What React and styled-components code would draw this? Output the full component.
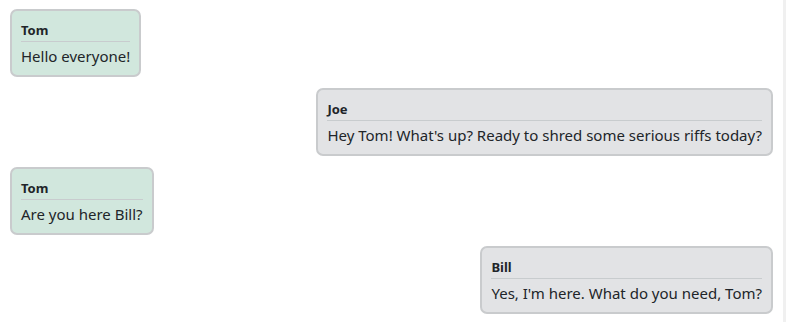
import React from 'react';
import styled, { createGlobalStyle } from 'styled-components';

const GlobalStyle = createGlobalStyle`
  html, body {
    margin: 0;
    padding: 0;
    background: #fff;
  }
  body {
    font-family: "Noto Sans", "Open Sans", sans-serif;
    color: #212529;
  }
`;

const Page = styled.div`
  width: 786px;
  height: 322px;
  box-sizing: border-box;
  border-right: 3px solid #f0f0f0;
  padding: 9px 10px 0 10px;
  display: flex;
  flex-direction: column;
  gap: 11px;
`;

const Row = styled.div`
  display: flex;
  justify-content: ${(p) => (p.$mine ? 'flex-start' : 'flex-end')};
`;

const Bubble = styled.div`
  background: ${(p) => (p.$mine ? '#d1e7dd' : '#e2e3e5')};
  border: 2px solid #c9cbcd;
  border-radius: 7px;
  padding: 10px 9px 9px 9px;
`;

const Name = styled.div`
  font-size: 13px;
  font-weight: 700;
  line-height: 18px;
  padding-bottom: 2px;
  border-bottom: 1px solid #c8ccce;
`;

const Text = styled.div`
  font-size: 15px;
  line-height: 20px;
  margin-top: 4px;
  white-space: nowrap;
`;

const messages = [
  { name: 'Tom', text: 'Hello everyone!', mine: true },
  { name: 'Joe', text: "Hey Tom! What's up? Ready to shred some serious riffs today?", mine: false },
  { name: 'Tom', text: 'Are you here Bill?', mine: true },
  { name: 'Bill', text: "Yes, I'm here. What do you need, Tom?", mine: false },
];

export default function App() {
  return (
    <>
      <GlobalStyle />
      <Page>
        {messages.map((m, i) => (
          <Row key={i} $mine={m.mine}>
            <Bubble $mine={m.mine}>
              <Name>{m.name}</Name>
              <Text>{m.text}</Text>
            </Bubble>
          </Row>
        ))}
      </Page>
    </>
  );
}
